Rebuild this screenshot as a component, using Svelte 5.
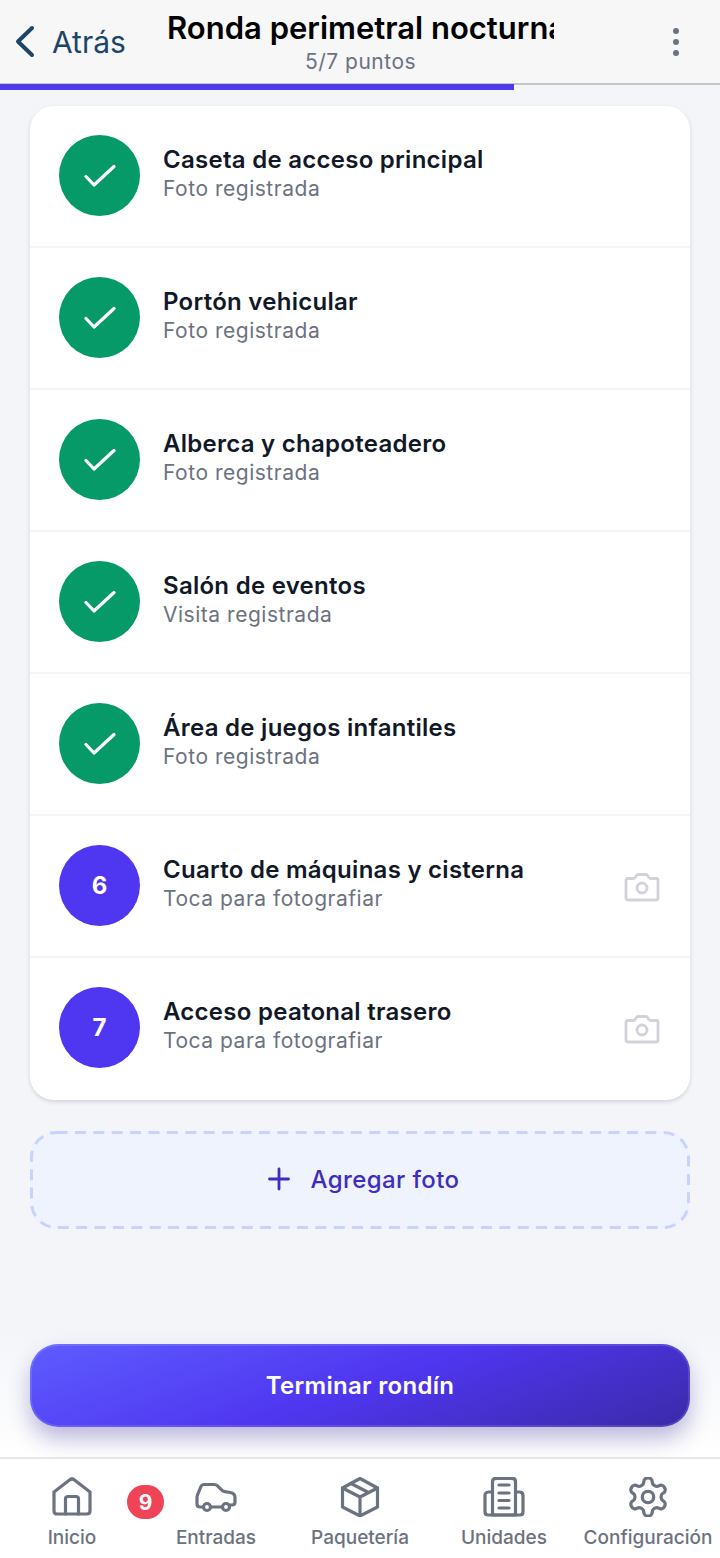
<script>
	const total = 7;
	const points = [
		{ n: 1, name: 'Caseta de acceso principal', status: 'Foto registrada', done: true },
		{ n: 2, name: 'Portón vehicular', status: 'Foto registrada', done: true },
		{ n: 3, name: 'Alberca y chapoteadero', status: 'Foto registrada', done: true },
		{ n: 4, name: 'Salón de eventos', status: 'Visita registrada', done: true },
		{ n: 5, name: 'Área de juegos infantiles', status: 'Foto registrada', done: true },
		{ n: 6, name: 'Cuarto de máquinas y cisterna', status: 'Toca para fotografiar', done: false },
		{ n: 7, name: 'Acceso peatonal trasero', status: 'Toca para fotografiar', done: false }
	];
	const doneCount = points.filter((p) => p.done).length;
</script>

<div class="screen">
	<header class="topbar">
		<button type="button" class="back">
			<svg width="22" height="34" viewBox="0 0 22 34" fill="none" stroke="#1d4568" stroke-width="4" stroke-linecap="round" stroke-linejoin="round"><path d="M17 3 L3 16.500 L17 30" /></svg>
			<span>Atrás</span>
		</button>
		<div class="heading">
			<h1>Ronda perimetral nocturna</h1>
			<p>{doneCount}/{total} puntos</p>
		</div>
		<button type="button" class="more" aria-label="Más">
			<i></i><i></i><i></i>
		</button>
	</header>
	<div class="progress"><div class="progress-fill" style="width: {(doneCount / total) * 100}%"></div></div>

	<main class="content">
		<ul class="card">
			{#each points as point}
				<li class="row">
					<div class="badge" class:done={point.done}>
						{#if point.done}
							<svg width="32" height="24" viewBox="0 0 32 24" fill="none" stroke="#fff" stroke-width="3.200" stroke-linecap="round" stroke-linejoin="round"><path d="M2 12.500 L10 21 L30 2.500" /></svg>
						{:else}
							{point.n}
						{/if}
					</div>
					<div class="text">
						<div class="name">{point.name}</div>
						<div class="status">{point.status}</div>
					</div>
					{#if !point.done}
						<svg class="camera" width="36" height="30" viewBox="0 0 36 30" fill="none" stroke="#d1d3d8" stroke-width="2.800" stroke-linecap="round" stroke-linejoin="round">
							<path d="M4 6.500h5.500c.8 0 1.400-.4 1.800-1.100l1-1.800c.4-.7 1-1.100 1.800-1.100h7.800c.8 0 1.400.4 1.800 1.100l1 1.800c.4.7 1 1.100 1.800 1.100H32c1.200 0 2 .8 2 2V26c0 1.200-.8 2-2 2H4c-1.200 0-2-.8-2-2V8.500c0-1.200.8-2 2-2z" />
							<circle cx="18" cy="16" r="5" />
						</svg>
					{/if}
				</li>
			{/each}
		</ul>

		<button type="button" class="add-photo">
			<svg class="dashes" width="660" height="98" viewBox="0 0 660 98" fill="none"><rect x="1.500" y="1.500" width="657" height="95" rx="25" stroke="#c7d2fe" stroke-width="3" stroke-dasharray="11 7.400" /></svg>
			<svg width="22" height="24" viewBox="0 0 22 24" fill="none" stroke="#3f2cc0" stroke-width="2.800" stroke-linecap="round"><path d="M11 2v20M1.500 12h19" /></svg>
			<span>Agregar foto</span>
		</button>
	</main>

	<div class="footer">
		<button type="button" class="finish">Terminar rondín</button>
	</div>

	<nav class="tabs">
		<div class="tab">
			<svg width="40" height="40" viewBox="0 0 40 40" fill="none" stroke="#6b7280" stroke-width="3.200" stroke-linecap="round" stroke-linejoin="round">
				<path d="M2 15 L17.500 3 c1.500-1.200 3.500-1.200 5 0 L38 15 V34 c0 2-1.200 3-3 3 H5 c-1.800 0-3-1-3-3z" />
				<path d="M13.500 37 V22 c0-1.500 1-2.500 2.500-2.500 h8 c1.500 0 2.500 1 2.500 2.500 v15" />
			</svg>
			<span>Inicio</span>
		</div>
		<div class="tab">
			<span class="count">9</span>
			<svg width="42" height="40" viewBox="0 0 42 40" fill="none" stroke="#6b7280" stroke-width="3.200" stroke-linecap="round" stroke-linejoin="round">
				<path d="M8.500 30 H5 c-1.500 0-3-1-3-3 V20.500 c0-1 .3-2 .7-3 l3-7.500 c.6-1.500 1.800-2.500 3.500-2.500 H19 c1.500 0 2.800.6 3.800 1.600 l4 4 c.8.8 1.800 1.300 3 1.500 l5.500.9 c3 .5 4.700 2.300 4.700 5 v4.500 c0 1.500-1 3-3 3 H34.500 M15.500 30 H27.500" />
				<circle cx="12" cy="30" r="3.500" />
				<circle cx="31" cy="30" r="3.500" />
			</svg>
			<span>Entradas</span>
		</div>
		<div class="tab">
			<svg width="40" height="40" viewBox="0 0 40 40" fill="none" stroke="#6b7280" stroke-width="3.200" stroke-linecap="round" stroke-linejoin="round">
				<path d="M20 1.500 L37.500 11 V30 L20 39 L2.500 30 V11z" />
				<path d="M2.500 11 L20 20 L37.500 11 M20 20 V39 M11 6.500 L28.500 15.500" />
			</svg>
			<span>Paquetería</span>
		</div>
		<div class="tab">
			<svg width="42" height="40" viewBox="0 0 42 40" fill="none" stroke="#6b7280" stroke-width="3.200" stroke-linecap="round" stroke-linejoin="round">
				<path d="M9.500 38 V4.500 c0-2 1.200-3.200 3.400-3.200 h16.200 c2.200 0 3.400 1.200 3.400 3.200 V38z" />
				<path d="M9.500 15 H5.500 C3.200 15 2 16.500 2 18.500 V35 c0 2 1.200 3 3 3 h32 c1.800 0 3-1 3-3 V18.500 C40 16.500 38.800 15 36.500 15 H32.500" />
				<path d="M16 8 h10 M16 16 h10 M16 23.500 h10 M16 31 h10" />
			</svg>
			<span>Unidades</span>
		</div>
		<div class="tab">
			<svg width="40" height="40" viewBox="1.500 1.500 21 21" fill="none" stroke="#6b7280" stroke-width="1.700" stroke-linecap="round" stroke-linejoin="round">
				<path d="M12.220 2h-.44a2 2 0 0 0-2 2v.18a2 2 0 0 1-1 1.730l-.43.25a2 2 0 0 1-2 0l-.15-.08a2 2 0 0 0-2.730.73l-.22.38a2 2 0 0 0 .73 2.730l.15.1a2 2 0 0 1 1 1.720v.51a2 2 0 0 1-1 1.740l-.15.09a2 2 0 0 0-.73 2.730l.22.38a2 2 0 0 0 2.730.73l.15-.08a2 2 0 0 1 2 0l.43.25a2 2 0 0 1 1 1.730V20a2 2 0 0 0 2 2h.44a2 2 0 0 0 2-2v-.18a2 2 0 0 1 1-1.730l.43-.25a2 2 0 0 1 2 0l.15.08a2 2 0 0 0 2.730-.73l.22-.39a2 2 0 0 0-.73-2.730l-.15-.08a2 2 0 0 1-1-1.740v-.5a2 2 0 0 1 1-1.740l.15-.09a2 2 0 0 0 .73-2.730l-.22-.38a2 2 0 0 0-2.730-.73l-.15.08a2 2 0 0 1-2 0l-.43-.25a2 2 0 0 1-1-1.730V4a2 2 0 0 0-2-2z" />
				<circle cx="12" cy="12" r="3" />
			</svg>
			<span>Configuración</span>
		</div>
	</nav>
</div>

<style>
	:global(body) {
		margin: 0;
		background: #f3f5f9;
	}
	.screen {
		width: 720px;
		height: 1558px;
		display: flex;
		flex-direction: column;
		font-family: Inter, "Liberation Sans", sans-serif;
		background: #f3f5f9;
		overflow: hidden;
	}
	button {
		font-family: inherit;
		border: none;
		background: none;
		padding: 0;
	}
	.topbar {
		height: 85px;
		box-sizing: border-box;
		flex: none;
		display: flex;
		align-items: flex-start;
		background: #f7f7f8;
		border-bottom: 2px solid #c6c6c8;
		margin-bottom: -1px;
	}
	.back {
		display: flex;
		align-items: center;
		gap: 15px;
		margin: 25px 0 0 15px;
		color: #1d4568;
		font-size: 30px;
		line-height: 34px;
		width: 152px;
	}
	.heading {
		width: 387px;
		text-align: center;
	}
	.heading h1 {
		margin: 9px 0 0;
		font-size: 31px;
		line-height: 38px;
		font-weight: 600;
		color: #000;
		white-space: nowrap;
		overflow: hidden;
		text-align: left;
	}
	.heading p {
		margin: 2px 0 0;
		font-size: 21px;
		line-height: 26px;
		letter-spacing: 0.5px;
		color: #6b7280;
	}
	.more {
		margin: 28px 0 0 119px;
		display: flex;
		flex-direction: column;
		gap: 5px;
	}
	.more i {
		width: 6px;
		height: 6px;
		border-radius: 50%;
		background: #6b7280;
	}
	.progress {
		flex: none;
		height: 6px;
		position: relative;
	}
	.progress-fill {
		height: 100%;
		background: #4f3ce8;
	}
	.content {
		flex: 1;
		padding: 16px 30px 0;
		display: flex;
		flex-direction: column;
	}
	.card {
		list-style: none;
		margin: 0;
		padding: 0;
		background: #fff;
		border-radius: 24px;
		box-shadow: 0 2px 4px rgba(17, 24, 39, 0.14);
	}
	.row {
		height: 142px;
		box-sizing: border-box;
		display: flex;
		align-items: center;
		padding: 0 30px 1px 29px;
		gap: 23px;
		border-bottom: 2px solid #f3f4f6;
	}
	.row:last-child {
		border-bottom: none;
		padding-bottom: 3px;
	}
	.badge {
		width: 81px;
		height: 81px;
		flex: none;
		border-radius: 50%;
		background: #4f36f0;
		color: #fff;
		font-size: 24px;
		font-weight: 700;
		display: flex;
		align-items: center;
		justify-content: center;
	}
	.badge.done {
		background: #059a68;
	}
	.text {
		flex: 1;
		min-width: 0;
		padding-bottom: 5px;
	}
	.name {
		font-size: 24px;
		line-height: 30px;
		font-weight: 600;
		letter-spacing: 0.27px;
		margin-bottom: 1px;
		color: #111827;
	}
	.status {
		font-size: 21px;
		line-height: 26px;
		letter-spacing: 0.52px;
		color: #6b7280;
	}
	.camera {
		flex: none;
		margin-top: 3px;
	}
	.add-photo {
		position: relative;
		margin-top: 31px;
		height: 98px;
		border-radius: 25px;
		background: #eff3fd;
		display: flex;
		align-items: center;
		justify-content: center;
		gap: 21px;
		color: #3f2cc0;
		font-size: 24px;
		font-weight: 500;
		letter-spacing: 0.4px;
		padding: 0 0 2px 7px;
	}
	.dashes {
		position: absolute;
		left: 0;
		top: 0;
	}
	.footer {
		flex: none;
		height: 127px;
		box-sizing: border-box;
		padding: 14px 30px 0;
		background: linear-gradient(#f3f5f9, #fff);
	}
	.finish {
		width: 100%;
		height: 83px;
		border-radius: 28px;
		color: #fff;
		font-size: 24px;
		font-weight: 600;
		letter-spacing: 0.3px;
		background: linear-gradient(160deg, #5e5cff 0%, #4f36f0 50%, #3b2aa8 100%);
		box-shadow: inset 0 0 0 2px rgba(255, 255, 255, 0.12), 0 12px 22px rgba(52, 44, 150, 0.32);
	}
	.tabs {
		flex: none;
		height: 101px;
		box-sizing: border-box;
		display: flex;
		background: #fff;
		border-top: 2px solid #e5e7eb;
		padding-top: 18px;
	}
	.tab {
		position: relative;
		flex: 1;
		min-width: 0;
		display: flex;
		flex-direction: column;
		align-items: center;
		height: 72px;
		justify-content: space-between;
		color: #6b7280;
		font-size: 19px;
		font-weight: 500;
		white-space: nowrap;
	}
	.count {
		position: absolute;
		left: -17px;
		top: 8px;
		width: 37px;
		height: 34px;
		border-radius: 17px;
		background: #ef4358;
		color: #fff;
		font-size: 21px;
		font-weight: 700;
		display: flex;
		align-items: center;
		justify-content: center;
	}
</style>
